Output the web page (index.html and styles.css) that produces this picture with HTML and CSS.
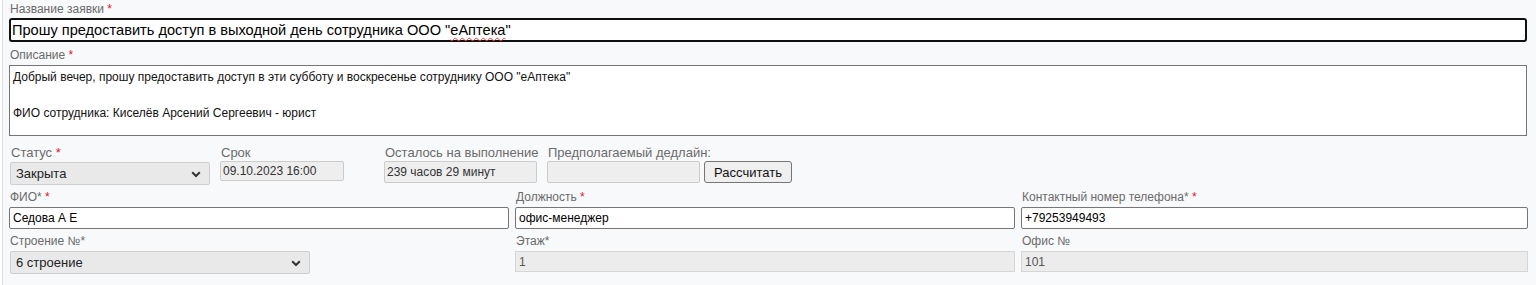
FILE: index.html
```html
<!DOCTYPE html>
<html lang="ru">
<head>
<meta charset="utf-8">
<title>Заявка</title>
<link rel="stylesheet" href="styles.css">
</head>
<body>
<div class="page">
  <div class="field">
    <label class="lbl">Название заявки <span class="req">*</span></label>
    <div class="title-input" role="textbox">Прошу предоставить доступ в выходной день сотрудника ООО "<span class="spell">еАптека</span>"</div>
  </div>
  <div class="field">
    <label class="lbl lbl-desc">Описание <span class="req">*</span></label>
    <textarea class="desc">Добрый вечер, прошу предоставить доступ в эти субботу и воскресенье сотруднику ООО "еАптека"

ФИО сотрудника: Киселёв Арсений Сергеевич - юрист</textarea>
  </div>

  <div class="status-row">
    <div class="grp grp-status">
      <label class="lbl lbl-lg">Статус <span class="req">*</span></label>
      <div class="sel sel-status">
        <span class="sel-text">Закрыта</span>
        <svg class="chev" width="10" height="7" viewBox="0 0 10 7"><path d="M1.2 1.3 L5 5 L8.8 1.3" fill="none" stroke="#333" stroke-width="2"/></svg>
      </div>
    </div>
    <div class="grp grp-srok">
      <label class="lbl lbl-lg">Срок</label>
      <input class="ro ro-srok" value="09.10.2023 16:00" readonly>
    </div>
    <div class="grp grp-left">
      <label class="lbl lbl-lg">Осталось на выполнение</label>
      <input class="ro ro-left" value="239 часов 29 минут" readonly>
    </div>
    <div class="grp grp-dl">
      <label class="lbl lbl-lg">Предполагаемый дедлайн:</label>
      <div class="dl-line">
        <input class="ro ro-dl" value="" readonly>
        <button class="btn" type="button">Рассчитать</button>
      </div>
    </div>
  </div>

  <div class="grid3">
    <div class="cell">
      <label class="lbl">ФИО* <span class="req">*</span></label>
      <input class="txt" value="Седова А Е">
    </div>
    <div class="cell">
      <label class="lbl">Должность <span class="req">*</span></label>
      <input class="txt" value="офис-менеджер">
    </div>
    <div class="cell">
      <label class="lbl">Контактный номер телефона* <span class="req">*</span></label>
      <input class="txt" value="+79253949493">
    </div>
    <div class="cell">
      <label class="lbl">Строение №*</label>
      <div class="sel sel-build">
        <span class="sel-text">6 строение</span>
        <svg class="chev" width="10" height="7" viewBox="0 0 10 7"><path d="M1.2 1.3 L5 5 L8.8 1.3" fill="none" stroke="#333" stroke-width="2"/></svg>
      </div>
    </div>
    <div class="cell">
      <label class="lbl">Этаж*</label>
      <input class="dis" value="1" disabled>
    </div>
    <div class="cell">
      <label class="lbl">Офис №</label>
      <input class="dis" value="101" disabled>
    </div>
  </div>
</div>
</body>
</html>
```

FILE: styles.css
```css
* { box-sizing: border-box; }
html, body { margin: 0; padding: 0; }
body {
  background: #ffffff;
  font-family: "Liberation Sans", Arial, sans-serif;
  color: #222;
}
.page {
  margin-left: 2px;
  border-left: 1px solid #dcdfe3;
  background: #f8f9fa;
  height: 285px;
  padding: 2px 9px 0 6px;
}
.field { display: flex; flex-direction: column; }
.lbl {
  display: block;
  font-size: 12px;
  line-height: 14px;
  color: #6b6b6b;
  margin-left: 1px;
  white-space: nowrap;
}
.req { color: #e3132c; }
.lbl-lg { font-size: 13px; line-height: 16px; }
.title-input {
  margin-top: 2px;
  height: 24px;
  border: 2px solid #101010;
  border-radius: 3px;
  background: #fff;
  font-size: 14.6px;
  line-height: 20px;
  padding: 0 1px;
  color: #000;
  white-space: nowrap;
}
.spell {
  text-decoration: underline wavy #e53935;
  text-decoration-thickness: 1px;
  text-underline-offset: 2px;
}
.lbl-desc { margin-top: 6px; }
.desc {
  margin-top: 3px;
  width: 100%;
  height: 71px;
  border: 1px solid #767676;
  border-radius: 0;
  background: #fff;
  font-family: "Liberation Sans", Arial, sans-serif;
  font-size: 12px;
  line-height: 18px;
  padding: 2px 3px;
  color: #111;
  resize: none;
  display: block;
}
.status-row {
  display: flex;
  margin-top: 9px;
  align-items: flex-start;
  margin-left: 1px;
}
.grp { display: flex; flex-direction: column; }
.grp .lbl { margin-left: 1px; }
.grp-status { width: 200px; margin-right: 10px; }
.sel {
  position: relative;
  height: 23px;
  background: #e9e9e9;
  border: 1px solid #cfcfcf;
  border-radius: 2px;
  font-size: 13px;
  line-height: 21px;
  padding-left: 5px;
  color: #222;
}
.sel-status { margin-top: 1px; }
.chev { position: absolute; right: 8px; top: 8px; }
.grp-srok { width: 153px; margin-right: 11px; }
.ro {
  font-family: "Liberation Sans", Arial, sans-serif;
  height: 20px;
  background: #eeeeee;
  border: 1px solid #cccccc;
  border-radius: 2px;
  font-size: 12px;
  color: #333;
  padding: 0 2px;
  outline: none;
}
.ro-srok { width: 124px; height: 20px; }
.grp-left { width: 153px; margin-right: 10px; }
.ro-left { width: 153px; height: 22px; }
.dl-line { display: flex; gap: 4px; }
.ro-dl { width: 153px; height: 22px; }
.btn {
  font-family: "Liberation Sans", Arial, sans-serif;
  width: 88px;
  height: 22px;
  font-size: 13px;
  color: #111;
  background: #efefef;
  border: 1px solid #767676;
  border-radius: 3px;
  padding: 0;
}
.grid3 {
  display: grid;
  grid-template-columns: 500px 500px 507px;
  column-gap: 6px;
  row-gap: 5px;
  margin-top: 5px;
}
.cell { display: flex; flex-direction: column; }
.txt {
  font-family: "Liberation Sans", Arial, sans-serif;
  margin-top: 3px;
  height: 22px;
  border: 1px solid #767676;
  border-radius: 2px;
  background: #fff;
  font-size: 12px;
  padding: 0 3px;
  color: #000;
}
.sel-build { width: 300px; margin-top: 3px; margin-left: 1px; }
.dis {
  font-family: "Liberation Sans", Arial, sans-serif;
  margin-top: 3px;
  height: 21px;
  border: 1px solid #d6d6d6;
  background: #ececec;
  font-size: 12px;
  padding: 0 3px;
  color: #555;
}
```
